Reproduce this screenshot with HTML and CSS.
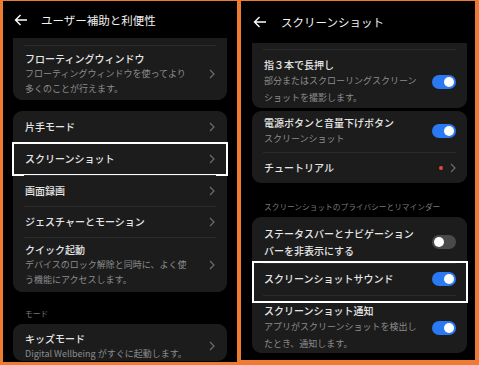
FILE: index.html
```html
<!DOCTYPE html>
<html lang="ja">
<head>
    <meta charset="UTF-8">
    <meta name="viewport" content="width=device-width, initial-scale=1.0">
    <title>ユーザー補助と利便性 / スクリーンショット</title>
    <link rel="stylesheet" href="styles.css">
</head>
<body>
    <div class="frame">

        <!-- Left screen: accessibility settings -->
        <section class="panel panel-left">
            <header class="bar">
                <svg class="back" width="14" height="12" viewBox="0 0 14 12"><path d="M13 6H1.5M6.5 1L1.5 6l5 5" fill="none" stroke="#fff" stroke-width="1.4"/></svg>
                <h1>ユーザー補助と利便性</h1>
            </header>

            <div class="card card-cut">
                <div class="line"></div>
                <div class="row row-float">
                    <div class="txt">
                        <div class="ttl">フローティングウィンドウ</div>
                        <div class="sub">フローティングウィンドウを使ってより<br>多くのことが行えます。</div>
                    </div>
                    <svg class="chev" width="6" height="10" viewBox="0 0 6 10"><path d="M1 1l4 4-4 4" fill="none" stroke="#6c6c6c" stroke-width="1.2"/></svg>
                </div>
            </div>

            <div class="card card-main">
                <div class="row row-a">
                    <div class="ttl">片手モード</div>
                    <svg class="chev" width="6" height="10" viewBox="0 0 6 10"><path d="M1 1l4 4-4 4" fill="none" stroke="#6c6c6c" stroke-width="1.2"/></svg>
                </div>
                <div class="row row-b mark mark-left">
                    <div class="ttl">スクリーンショット</div>
                    <svg class="chev" width="6" height="10" viewBox="0 0 6 10"><path d="M1 1l4 4-4 4" fill="none" stroke="#6c6c6c" stroke-width="1.2"/></svg>
                </div>
                <div class="row row-c">
                    <div class="ttl">画面録画</div>
                    <svg class="chev" width="6" height="10" viewBox="0 0 6 10"><path d="M1 1l4 4-4 4" fill="none" stroke="#6c6c6c" stroke-width="1.2"/></svg>
                </div>
                <div class="row row-c">
                    <div class="ttl">ジェスチャーとモーション</div>
                    <svg class="chev" width="6" height="10" viewBox="0 0 6 10"><path d="M1 1l4 4-4 4" fill="none" stroke="#6c6c6c" stroke-width="1.2"/></svg>
                </div>
                <div class="row row-quick">
                    <div class="txt">
                        <div class="ttl">クイック起動</div>
                        <div class="sub">デバイスのロック解除と同時に、よく使<br>う機能にアクセスします。</div>
                    </div>
                    <svg class="chev" width="6" height="10" viewBox="0 0 6 10"><path d="M1 1l4 4-4 4" fill="none" stroke="#6c6c6c" stroke-width="1.2"/></svg>
                </div>
            </div>

            <div class="label label-mode">モード</div>

            <div class="card">
                <div class="row row-kids">
                    <div class="txt">
                        <div class="ttl">キッズモード</div>
                        <div class="sub">Digital Wellbeing がすぐに起動します。</div>
                    </div>
                    <svg class="chev" width="6" height="10" viewBox="0 0 6 10"><path d="M1 1l4 4-4 4" fill="none" stroke="#6c6c6c" stroke-width="1.2"/></svg>
                </div>
            </div>
        </section>

        <!-- Right screen: screenshot settings -->
        <section class="panel panel-right">
            <header class="bar">
                <svg class="back" width="14" height="12" viewBox="0 0 14 12"><path d="M13 6H1.5M6.5 1L1.5 6l5 5" fill="none" stroke="#fff" stroke-width="1.4"/></svg>
                <h1>スクリーンショット</h1>
            </header>

            <div class="card card-cut">
                <div class="line"></div>
                <div class="row row-three">
                    <div class="txt">
                        <div class="ttl">指３本で長押し</div>
                        <div class="sub">部分またはスクローリングスクリーン<br>ショットを撮影します。</div>
                    </div>
                    <span class="sw on"></span>
                </div>
            </div>

            <div class="card card-gap">
                <div class="row row-power">
                    <div class="txt">
                        <div class="ttl">電源ボタンと音量下げボタン</div>
                        <div class="sub">スクリーンショット</div>
                    </div>
                    <span class="sw on"></span>
                </div>
                <div class="row row-tut">
                    <div class="ttl">チュートリアル</div>
                    <span class="dot"></span>
                    <svg class="chev" width="6" height="10" viewBox="0 0 6 10"><path d="M1 1l4 4-4 4" fill="none" stroke="#6c6c6c" stroke-width="1.2"/></svg>
                </div>
            </div>

            <div class="label label-privacy">スクリーンショットのプライバシーとリマインダー</div>

            <div class="card">
                <div class="row row-status">
                    <div class="ttl ttl-two">ステータスバーとナビゲーション<br>バーを非表示にする</div>
                    <span class="sw"></span>
                </div>
                <div class="row row-sound mark mark-right">
                    <div class="ttl">スクリーンショットサウンド</div>
                    <span class="sw on"></span>
                </div>
                <div class="row row-notify">
                    <div class="txt">
                        <div class="ttl">スクリーンショット通知</div>
                        <div class="sub">アプリがスクリーンショットを検出し<br>たとき、通知します。</div>
                    </div>
                    <span class="sw on"></span>
                </div>
            </div>
        </section>

    </div>
</body>
</html>
```

FILE: styles.css
```css
* {
    box-sizing: border-box;
}
body {
    margin: 0;
    background: #ef7b33;
    font-family: "Noto Sans CJK JP", "Noto Sans", sans-serif;
    color: #e6e6e6;
}
h1 {
    margin: 0;
    font-size: 11.5px;
    font-weight: 400;
    color: #f2f2f2;
}
.frame {
    display: flex;
    gap: 4px;
    padding: 1px 4px 0 3px;
    height: 365px;
}
.panel {
    width: 234px;
    background: #000;
    overflow: hidden;
}
.panel-left {
    height: 361px;
}
.panel-right {
    height: 359px;
}

/* header */
.bar {
    display: flex;
    align-items: center;
    gap: 13px;
}
.panel-left .bar {
    height: 37px;
    padding-left: 11px;
}
.panel-right .bar {
    height: 42px;
    padding-left: 12px;
    gap: 14px;
}
.back {
    flex: none;
}

/* cards */
.card {
    background: #1c1c1c;
    border-radius: 9px;
}
.panel-left .card {
    margin: 0 10px;
}
.panel-right .card {
    margin: 0 8px 0 11px;
}
.card-cut {
    border-radius: 0 0 9px 9px;
    padding-top: 7px;
}
.panel-right .card-cut {
    padding-top: 6px;
}
.panel-left .card-main {
    margin-top: 11px;
}
.panel-right .card-gap {
    margin-top: 3px;
}
.line {
    height: 1px;
    margin: 0 11px;
    background: #2c2c2c;
}

/* rows */
.row {
    display: flex;
    align-items: center;
    padding: 0 12px;
    position: relative;
}
.panel-right .row {
    padding-right: 11px;
}
.row + .row::before {
    content: "";
    position: absolute;
    top: 0;
    left: 11px;
    right: 11px;
    height: 1px;
    background: #2c2c2c;
}
.txt {
    flex: 1;
}
.ttl {
    flex: 1;
    font-size: 10px;
    font-weight: 500;
    line-height: 14px;
    white-space: nowrap;
}
.sub {
    font-size: 9px;
    line-height: 15px;
    color: #8c8c8c;
    white-space: nowrap;
}
.panel-right .sub {
    line-height: 17px;
}
.chev {
    flex: none;
}

.row-float {
    padding-top: 6px;
    padding-bottom: 4px;
}
.row-a,
.row-b {
    height: 32px;
}
.row-c {
    height: 31px;
}
.row-quick {
    padding-top: 6px;
    padding-bottom: 5px;
}
.row-kids {
    padding-top: 8px;
    align-items: flex-end;
}
.row-kids .chev {
    margin-bottom: 10px;
}

.row-three {
    padding-top: 8px;
    padding-bottom: 2px;
}
.row-power {
    padding-top: 4px;
    padding-bottom: 5px;
}
.row-power .ttl,
.row-power .sub {
    line-height: 16px;
}
.row-tut {
    height: 31px;
}
.row-status {
    padding-top: 8px;
    padding-bottom: 4px;
}
.ttl-two {
    line-height: 17px;
}
.row-sound {
    height: 32px;
}
.row-notify {
    padding-top: 9px;
    padding-bottom: 1px;
}

/* section labels */
.label {
    font-size: 7.7px;
    line-height: 10px;
    color: #7a7a7a;
    white-space: nowrap;
}
.label-mode {
    padding: 17px 0 5px 22px;
}
.label-privacy {
    padding: 19px 0 5px 23px;
}

/* switches */
.sw {
    flex: none;
    position: relative;
    width: 24px;
    height: 14px;
    border-radius: 7px;
    background: #4a4a4a;
}
.sw::after {
    content: "";
    position: absolute;
    top: 2px;
    left: 2px;
    width: 10px;
    height: 10px;
    border-radius: 50%;
    background: #fff;
}
.sw.on {
    background: #2a79f2;
}
.sw.on::after {
    left: 12px;
}

.dot {
    width: 4px;
    height: 4px;
    border-radius: 50%;
    background: #e5453b;
    margin-right: 7px;
}

/* annotation boxes */
.mark::after {
    content: "";
    position: absolute;
    border: 2px solid #fff;
    pointer-events: none;
}
.mark-left::after {
    top: -1px;
    bottom: -1px;
    left: -1px;
    right: -1px;
}
.mark-right::after {
    top: -2px;
    bottom: -8px;
    left: 0;
    right: -1px;
}
```
